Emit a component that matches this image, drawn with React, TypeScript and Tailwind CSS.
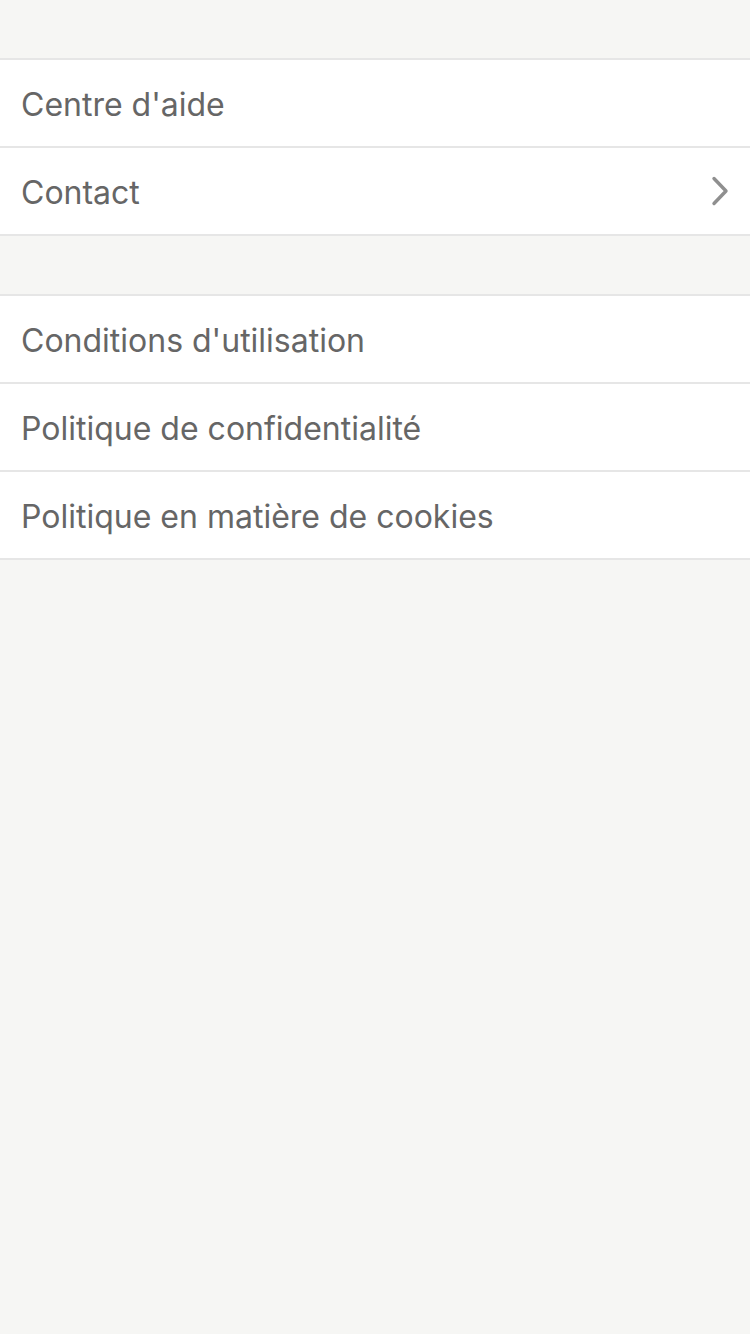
const GROUPS = [
  [
    { label: "Centre d'aide", chevron: false },
    { label: 'Contact', chevron: true },
  ],
  [
    { label: "Conditions d'utilisation", chevron: false },
    { label: 'Politique de confidentialité', chevron: false },
    { label: 'Politique en matière de cookies', chevron: false },
  ],
]

function Chevron() {
  return (
    <svg width="18" height="30" viewBox="0 0 18 30" className="shrink-0">
      <path d="M3 2.5 L15 15 L3 27.5" fill="none" stroke="#8f8f8f" strokeWidth="3.4" strokeLinecap="round" strokeLinejoin="round" />
    </svg>
  )
}

export default function App() {
  return (
    <div className="min-h-[1334px] w-[750px] bg-[#f6f6f4] pt-[58px] flex flex-col gap-[58px] font-['Inter','Liberation_Sans',sans-serif]">
      {GROUPS.map((group, gi) => (
        <div key={gi} className="bg-white border-t-2 border-[#e6e6e6]">
          {group.map((row) => (
            <div
              key={row.label}
              className="h-[88px] flex items-center justify-between pl-[21px] pr-[21px] border-b-2 border-[#e6e6e6]"
            >
              <span className="text-[32px] leading-none pt-[4px] text-[#666666]">{row.label}</span>
              {row.chevron && <Chevron />}
            </div>
          ))}
        </div>
      ))}
    </div>
  )
}
